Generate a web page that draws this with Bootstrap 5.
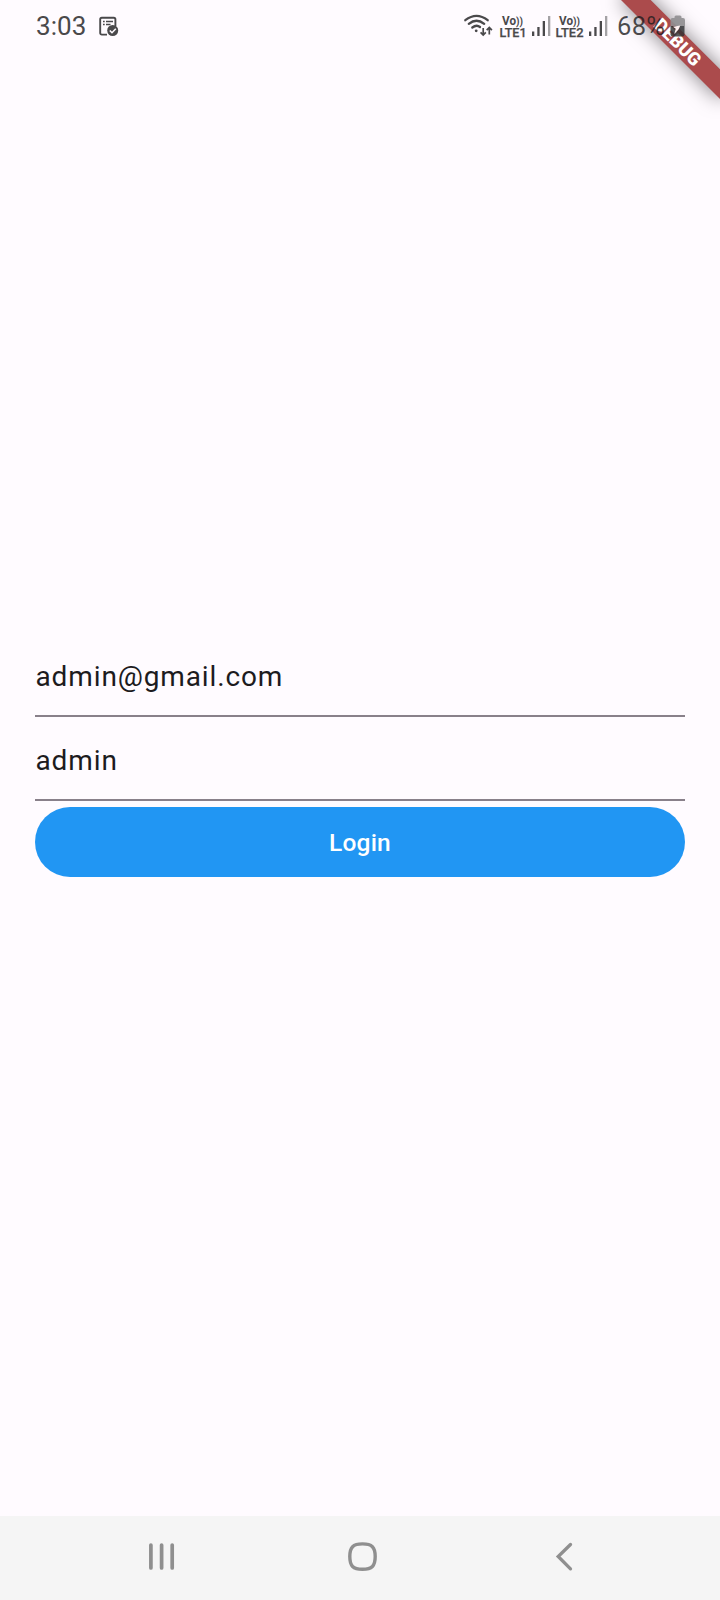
<!DOCTYPE html>
<html lang="en">
<head>
<meta charset="utf-8">
<meta name="viewport" content="width=device-width, initial-scale=1">
<title>Login</title>
<link href="https://cdn.jsdelivr.net/npm/bootstrap@5.3.0/dist/css/bootstrap.min.css" rel="stylesheet">
<style>
body { font-family: Roboto, "Noto Sans", sans-serif; background: #fffbff; color: #1d1b1e; height: 1600px; }
.status { height: 52px; padding: 0 35px 0 36px; color: #4a494b; z-index: 3; }
.status svg { display: block; flex: none; font-family: Roboto, sans-serif; }
.clock { font-size: 26px; line-height: 52px; width: 50px; margin-right: 12px; letter-spacing: .1px; }
.field { height: 84px; padding: 4px 0 0 .5px; border: 0; border-bottom: 2px solid #89808a; border-radius: 0; background: transparent; color: #1d1b1e; font-size: 28px; letter-spacing: .875px; box-shadow: none; }
.form-area { padding: 581px 35px 0; }
.login-btn { height: 70px; margin-top: 6px; background: #2196f3; color: #fff; font-size: 24.5px; font-weight: 500; letter-spacing: .175px; border: 0; padding: 2px 0 0; }
.soft-keys { height: 84px; background: #f5f5f5; padding-left: 148px; }
.key-home { margin-left: 170px; margin-right: 177px; }
.ribbon-clip { width: 150px; height: 150px; top: 0; right: 0; z-index: 2; pointer-events: none; }
.ribbon { position: absolute; left: 80px; top: 49px; width: 140px; height: 21px; transform: rotate(45deg); transform-origin: 70px -49px; background: #ab4b4c; color: #fff; font-size: 18.2px; line-height: 22px; font-weight: 900; text-align: center; box-shadow: 0 0 20px rgba(0,0,0,.5); }
</style>
</head>
<body class="d-flex flex-column overflow-hidden position-relative">
<header class="status d-flex align-items-center position-relative">
  <span class="clock">3:03</span>
  <svg width="22" height="52" viewBox="98 0 22 52" fill="none" stroke="currentColor">
    <path d="M107 34.600h-5.200a1.600 1.600 0 0 1-1.600-1.600V19.300a1.600 1.600 0 0 1 1.600-1.600h12a1.600 1.600 0 0 1 1.600 1.600V26" stroke-width="1.900"/>
    <path d="M103 21.500h1.700M106 21.500h7M103 24.500h1.700M106 24.500h4.500" stroke-width="1.500"/>
    <circle cx="112.700" cy="30.500" r="5.500" fill="currentColor" stroke="none"/>
    <path d="M109.800 30.500l2.200 2.200 3.800-3.900" stroke="#fffbff" stroke-width="1.600"/>
  </svg>
  <svg class="ms-auto" width="223" height="52" viewBox="462 0 223 52" fill="currentColor">
    <g fill="none" stroke="currentColor" stroke-width="2.300" stroke-linecap="round">
      <path d="M465.300 20.200Q476.500 11.600 487.700 20.200"/>
      <path d="M468.800 23.900Q476.500 17.700 484.200 23.900"/>
      <path d="M472.300 27.500Q476.500 24.200 480 27"/>
    </g>
    <circle cx="476.200" cy="30.800" r="1.400"/>
    <path d="M483.200 28v7M480.600 32.300l2.600 2.700 2.600-2.700M489.300 34.500v-7M486.700 30.200l2.600-2.700 2.600 2.700" fill="none" stroke="currentColor" stroke-width="1.700"/>
    <g font-weight="700">
      <text x="502" y="25" font-size="12.200" textLength="14" lengthAdjust="spacingAndGlyphs">Vo</text>
      <text x="516" y="24.500" font-size="11.500" textLength="7" lengthAdjust="spacingAndGlyphs">))</text>
      <text x="499.500" y="37" font-size="12.800" font-weight="500" stroke="currentColor" stroke-width=".25" textLength="27" lengthAdjust="spacingAndGlyphs">LTE1</text>
      <text x="559" y="25" font-size="12.200" textLength="14" lengthAdjust="spacingAndGlyphs">Vo</text>
      <text x="573" y="24.500" font-size="11.500" textLength="7" lengthAdjust="spacingAndGlyphs">))</text>
      <text x="555.500" y="37" font-size="12.800" font-weight="500" stroke="currentColor" stroke-width=".25" textLength="28" lengthAdjust="spacingAndGlyphs">LTE2</text>
    </g>
    <path d="M532 31.500h2.300v4.500h-2.300zM537.300 27h2.300v9h-2.300zM542.700 21h2.300v15h-2.300z"/>
    <path d="M589 31.500h2.300v4.500h-2.300zM594.300 27h2.300v9h-2.300zM599.700 21h2.300v15h-2.300z"/>
    <path d="M548 16h2.300v20h-2.300zM605 16h2.300v20h-2.300z" opacity=".5"/>
    <text x="617" y="35" font-size="25.500" textLength="48" fill="#1b1b1d" fill-opacity=".78">68%</text>
    <path d="M670.500 26v-6q0-2 2-2h2v-1q0-1.500 1.500-1.500h4q1.500 0 1.500 1.500v1h1.500q2 0 2 2v6z" fill="#8f8e90" fill-opacity=".9"/>
    <path d="M670.500 26h14v8.500q0 2-2 2h-10q-2 0-2-2z" fill="#303133" fill-opacity=".82"/>
    <path d="M680.300 25.500l-7.300 1.300 2.700 2-1.400 5.200 4.200-4.500z" fill="#fff0f0"/>
  </svg>
</header>
<main class="form-area flex-grow-1 d-flex flex-column">
  <input class="form-control field" value="admin@gmail.com" aria-label="Email">
  <input class="form-control field" value="admin" aria-label="Password">
  <button class="btn rounded-pill w-100 login-btn">Login</button>
</main>
<div class="ribbon-clip position-absolute overflow-hidden"><div class="ribbon">DEBUG</div></div>
<footer class="soft-keys d-flex align-items-center">
  <svg width="28" height="84" viewBox="148 1516 28 84" stroke="#8f8f8f" stroke-width="3.700" stroke-linecap="round"><path d="M150.900 1545v23M161.600 1545v23M172.200 1545v23"/></svg>
  <svg class="key-home" width="32" height="84" viewBox="346 1516 32 84" fill="none" stroke="#8f8f8f" stroke-width="3.400"><path d="M362.500 1543.900c9.500 0 12.700 3.200 12.700 12.700s-3.200 12.700-12.700 12.700-12.700-3.200-12.700-12.700 3.200-12.700 12.700-12.700z"/></svg>
  <svg width="18" height="84" viewBox="555 1516 18 84" fill="none" stroke="#8f8f8f" stroke-width="3.300" stroke-linecap="round"><path d="M570.500 1544.500l-12.300 12 12.300 12.300"/></svg>
</footer>
<script src="https://cdn.jsdelivr.net/npm/bootstrap@5.3.0/dist/js/bootstrap.bundle.min.js"></script>
</body>
</html>
